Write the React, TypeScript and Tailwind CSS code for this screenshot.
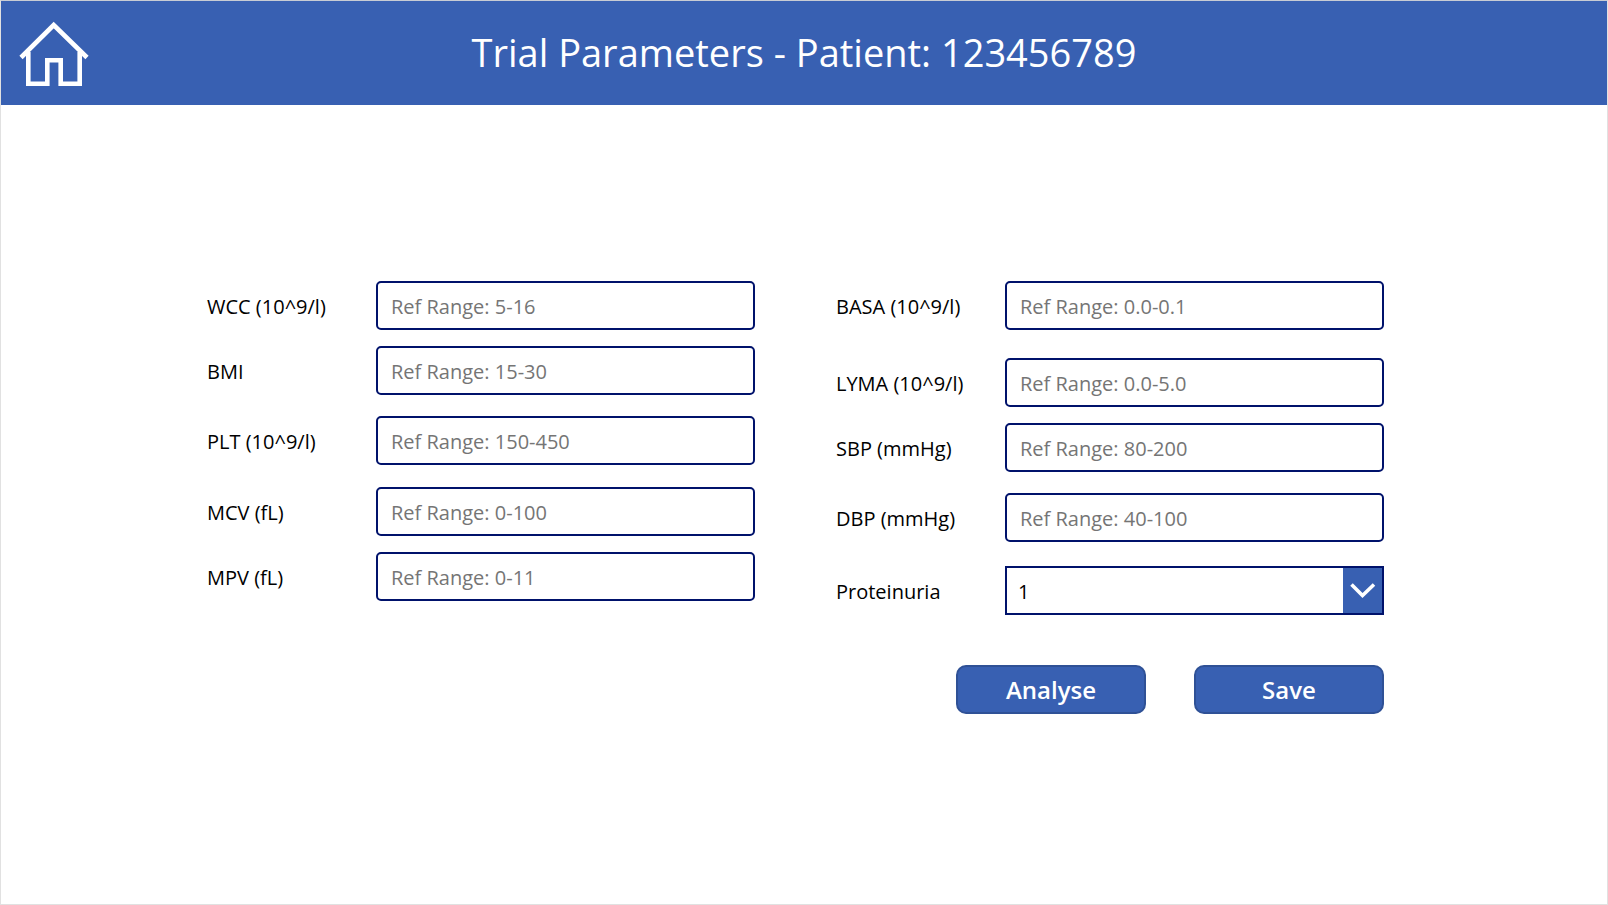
import React from "react";

type Field = {
  id: string;
  label: string;
  placeholder: string;
  gap: string;
};

const leftFields: Field[] = [
  { id: "wcc", label: "WCC (10^9/l)", placeholder: "Ref Range: 5-16", gap: "" },
  { id: "bmi", label: "BMI", placeholder: "Ref Range: 15-30", gap: "mt-[16px]" },
  { id: "plt", label: "PLT (10^9/l)", placeholder: "Ref Range: 150-450", gap: "mt-[21px]" },
  { id: "mcv", label: "MCV (fL)", placeholder: "Ref Range: 0-100", gap: "mt-[22px]" },
  { id: "mpv", label: "MPV (fL)", placeholder: "Ref Range: 0-11", gap: "mt-[16px]" },
];

const rightFields: Field[] = [
  { id: "basa", label: "BASA (10^9/l)", placeholder: "Ref Range: 0.0-0.1", gap: "" },
  { id: "lyma", label: "LYMA (10^9/l)", placeholder: "Ref Range: 0.0-5.0", gap: "mt-[28px]" },
  { id: "sbp", label: "SBP (mmHg)", placeholder: "Ref Range: 80-200", gap: "mt-[16px]" },
  { id: "dbp", label: "DBP (mmHg)", placeholder: "Ref Range: 40-100", gap: "mt-[21px]" },
];

const labelClass = "w-[169px] shrink-0 pt-[2px] text-[20px] leading-[28px] text-black";

function FieldRow({ field }: { field: Field }) {
  return (
    <div className={`flex items-center ${field.gap}`}>
      <label htmlFor={field.id} className={labelClass}>
        {field.label}
      </label>
      <input
        id={field.id}
        type="text"
        placeholder={field.placeholder}
        className="h-[49px] min-w-0 flex-1 rounded-[5px] border-2 border-[#00126b] bg-white px-[13px] pt-[2px] text-[20px] text-black placeholder:text-[#757575]"
      />
    </div>
  );
}

function ActionButton({ children }: { children: React.ReactNode }) {
  return (
    <button
      type="button"
      className="h-[49px] w-[190px] rounded-[10px] border-2 border-[#2f5196] bg-[#3860b2] text-[24px] leading-[32px] font-semibold text-white"
    >
      {children}
    </button>
  );
}

export default function App() {
  return (
    <div className="flex min-h-screen flex-col border border-[#e1e1e1] border-t-[#c8ccd4] bg-white font-['Open_Sans',sans-serif]">
      <header className="grid grid-cols-[108px_1fr_108px] items-center bg-[#3860b2]">
        <button type="button" aria-label="Home" className="h-[104px]">
          <svg viewBox="0 0 108 104" className="h-[104px] w-[108px]" fill="none" stroke="#fff" strokeWidth="4.6">
            <path d="M20 56.500 52.700 24 86 56.500" />
            <path d="M27.300 51V82.700H46.300V59.300H59.700V82.700H78.700V51" />
          </svg>
        </button>
        <h1 className="pb-[2px] text-center text-[38px] leading-[52px] text-white">
          Trial Parameters - Patient: 123456789
        </h1>
      </header>

      <main className="px-6 pt-10 pb-10 xl:pt-[176px] xl:pr-[223px] xl:pl-[206px]">
        <form onSubmit={(e) => e.preventDefault()}>
          <div className="grid grid-cols-1 gap-x-[81px] gap-y-6 lg:grid-cols-2">
            <div>
              {leftFields.map((field) => (
                <FieldRow key={field.id} field={field} />
              ))}
            </div>
            <div>
              {rightFields.map((field) => (
                <FieldRow key={field.id} field={field} />
              ))}
              <div className="mt-[24px] flex items-center">
                <label htmlFor="proteinuria" className={labelClass}>
                  Proteinuria
                </label>
                <div className="relative min-w-0 flex-1">
                  <select
                    id="proteinuria"
                    defaultValue="1"
                    className="block h-[49px] w-full appearance-none border-2 border-[#00126b] bg-white px-[11px] pt-[2px] text-[20px] text-black"
                  >
                    <option>0</option>
                    <option>1</option>
                    <option>2</option>
                    <option>3</option>
                  </select>
                  <span className="pointer-events-none absolute inset-y-[2px] right-[2px] flex w-[39px] items-center justify-center bg-[#3860b2]">
                    <svg viewBox="0 0 39 45" className="h-[45px] w-[39px]" fill="none" stroke="#fff" strokeWidth="3.6">
                      <path d="M8.500 16.500 19.500 27.500 31 16.500" />
                    </svg>
                  </span>
                </div>
              </div>
            </div>
          </div>
          <div className="mt-[50px] flex flex-wrap justify-end gap-[48px]">
            <ActionButton>Analyse</ActionButton>
            <ActionButton>Save</ActionButton>
          </div>
        </form>
      </main>
    </div>
  );
}
